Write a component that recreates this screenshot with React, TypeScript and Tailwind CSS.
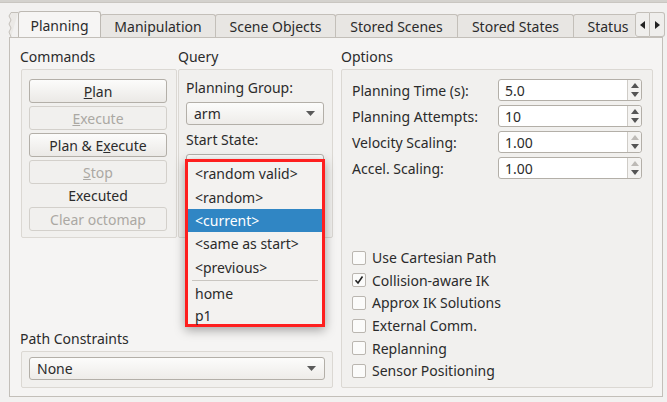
import React from 'react'

const font = "font-['Noto_Sans','DejaVu_Sans',sans-serif]"

function Btn({ children, disabled }: { children: React.ReactNode; disabled?: boolean }) {
  return (
    <div
      className={`h-[24px] flex items-center justify-center rounded-[3px] border text-[14px] ${
        disabled
          ? 'border-[#d3d0cb] text-[#aba8a3] bg-[#f1f0ee]'
          : 'border-[#b3afa8] text-[#2b2b2b] bg-linear-to-b from-[#fcfcfb] to-[#ebe9e6]'
      }`}
    >
      {children}
    </div>
  )
}

function Caret() {
  return (
    <svg width="9" height="5" viewBox="0 0 9 5" className="shrink-0">
      <path d="M0 0h9L4.5 5z" fill="#5a5a5a" />
    </svg>
  )
}

function Combo({ value, className = '' }: { value: string; className?: string }) {
  return (
    <div
      className={`h-[23px] flex items-center justify-between pl-[7px] pr-[8px] rounded-[3px] border border-[#b3afa8] bg-linear-to-b from-[#fcfcfb] to-[#eeece9] text-[14px] text-[#2b2b2b] ${className}`}
    >
      <span>{value}</span>
      <Caret />
    </div>
  )
}

function Spin({ value, upDisabled }: { value: string; upDisabled?: boolean }) {
  return (
    <div className="w-[144px] h-[22px] flex rounded-[3px] border border-[#b3afa8] bg-white text-[14px] text-[#2b2b2b]">
      <div className="flex-1 flex items-center pl-[6px]">{value}</div>
      <div className="w-[14px] flex flex-col items-center justify-center gap-[4px] border-l border-[#cfccc7] bg-[#f4f3f1] rounded-r-[3px]">
        <svg width="8" height="5" viewBox="0 0 8 5">
          <path d="M0 5h8L4 0z" fill={upDisabled ? '#bdbab6' : '#555'} />
        </svg>
        <svg width="8" height="5" viewBox="0 0 8 5">
          <path d="M0 0h8L4 5z" fill="#555" />
        </svg>
      </div>
    </div>
  )
}

function Check({ label, checked }: { label: string; checked?: boolean }) {
  return (
    <div className="h-[22.6px] flex items-center gap-[6px] text-[14px] text-[#2b2b2b]">
      <div className="w-[14px] h-[14px] rounded-[2px] border border-[#bab6b0] bg-[#fbfbfa] flex items-center justify-center">
        {checked && (
          <svg width="10" height="10" viewBox="0 0 10 10">
            <path d="M1.5 5.2 L4 8 L8.5 1.5" fill="none" stroke="#222" strokeWidth="1.6" />
          </svg>
        )}
      </div>
      <span>{label}</span>
    </div>
  )
}

function Tab({ label, w }: { label: string; w: string }) {
  return (
    <div
      className={`${w} shrink-0 h-[23px] flex items-center justify-center border border-b-0 border-[#c3bfb9] bg-[#e8e6e3] rounded-t-[3px] text-[14px] text-[#2b2b2b] -ml-[1px]`}
    >
      {label}
    </div>
  )
}

export default function App() {
  const items = ['<random valid>', '<random>', '<current>', '<same as start>', '<previous>']
  return (
    <div className={`${font} relative w-[667px] h-[402px] bg-[#f2f1f0] overflow-hidden flex flex-col`}>
      <div className="h-[3px] bg-[#d4d2ce] border-b border-[#c9c6c1]" />

      {/* tab bar */}
      <div className="h-[34px] flex items-end pl-[8px]">
        <svg width="10" height="25" viewBox="0 0 10 25" className="shrink-0">
          <path d="M10 0.5 H3 L1 4 L3 8 L1 12 L3 16 L1 20 L3 25" fill="#ebe9e6" stroke="#c3bfb9" />
        </svg>
        <div className="w-[617px] flex items-end overflow-hidden">
          <div className="w-[83px] shrink-0 h-[27px] flex items-center justify-center border border-b-0 border-[#bdb9b3] bg-[#f6f5f4] rounded-t-[3px] text-[14px] text-[#2b2b2b] relative z-10 -mb-[1px]">
            Planning
          </div>
          <Tab label="Manipulation" w="w-[116px]" />
          <Tab label="Scene Objects" w="w-[121px]" />
          <Tab label="Stored Scenes" w="w-[123px]" />
          <Tab label="Stored States" w="w-[117px]" />
          <Tab label="Status" w="w-[70px]" />
        </div>
        <div className="flex h-[25px]">
          <div className="w-[15px] flex items-center justify-center border border-[#c3bfb9] bg-[#efeeec] rounded-l-[3px]">
            <svg width="5" height="8" viewBox="0 0 5 8"><path d="M5 0v8L0 4z" fill="#222" /></svg>
          </div>
          <div className="w-[15px] flex items-center justify-center border border-l-0 border-[#c3bfb9] bg-[#efeeec] rounded-r-[3px]">
            <svg width="5" height="8" viewBox="0 0 5 8"><path d="M0 0v8L5 4z" fill="#222" /></svg>
          </div>
        </div>
      </div>

      {/* pane */}
      <div className="ml-[9px] w-[654px] h-[360px] border border-[#c3bfb9] bg-[#f5f4f3] flex gap-[8px] pl-[10px] pt-[9px] pb-[8px] text-[#2b2b2b]">
        {/* left column */}
        <div className="w-[313px] flex flex-col justify-between">
          <div className="flex gap-[1px]">
            <div className="w-[157px] flex flex-col">
              <div className="h-[22px] text-[14px] leading-[20px]">Commands</div>
              <div className="ml-[1px] w-[156px] h-[169px] border border-[#dbd8d3] rounded-[2px] bg-[#f1f0ee] pl-[7px] pt-[9px]">
                <div className="w-[138px] flex flex-col gap-[3px]">
                  <Btn><span><span className="underline">P</span>lan</span></Btn>
                  <Btn disabled><span><span className="underline">E</span>xecute</span></Btn>
                  <Btn><span>Plan &amp; E<span className="underline">x</span>ecute</span></Btn>
                  <Btn disabled><span><span className="underline">S</span>top</span></Btn>
                  <div className="h-[17px] flex items-center justify-center text-[14px]">Executed</div>
                  <Btn disabled>Clear octomap</Btn>
                </div>
              </div>
            </div>
            <div className="w-[155px] flex flex-col">
              <div className="h-[22px] text-[14px] leading-[20px]">Query</div>
              <div className="w-[155px] h-[169px] border border-[#dbd8d3] rounded-[2px] bg-[#f1f0ee] pl-[7px] pt-[8px]">
                <div className="w-[138px] flex flex-col">
                  <div className="h-[20px] text-[14px] leading-[20px]">Planning Group:</div>
                  <Combo value="arm" className="mt-[4px]" />
                  <div className="h-[20px] mt-[5px] text-[14px] leading-[20px]">Start State:</div>
                  {/* combo behind the open popup */}
                  <Combo value="" className="mt-[4px]" />
                </div>
              </div>
            </div>
          </div>

          <div className="flex flex-col">
            <div className="h-[22px] text-[14px] leading-[20px]">Path Constraints</div>
            <div className="ml-[1px] w-[312px] h-[37px] border border-[#dbd8d3] rounded-[2px] bg-[#f1f0ee] pl-[7px] pt-[5px]">
              <Combo value="None" className="w-[296px]" />
            </div>
          </div>
        </div>

        {/* right column */}
        <div className="w-[313px] flex flex-col">
          <div className="h-[22px] text-[14px] leading-[20px]">Options</div>
          <div className="w-[312px] h-[319px] border border-[#dbd8d3] rounded-[2px] bg-[#f1f0ee] pl-[10px] pt-[9px] pb-[5px] flex flex-col">
            <div className="flex flex-col gap-[4px]">
              {[
                ['Planning Time (s):', '5.0', false],
                ['Planning Attempts:', '10', false],
                ['Velocity Scaling:', '1.00', true],
                ['Accel. Scaling:', '1.00', true],
              ].map(([l, v, d]) => (
                <div key={l as string} className="flex items-center">
                  <div className="w-[146px] text-[14px]">{l as string}</div>
                  <Spin value={v as string} upDisabled={d as boolean} />
                </div>
              ))}
            </div>
            <div className="mt-auto flex flex-col">
              <Check label="Use Cartesian Path" />
              <Check label="Collision-aware IK" checked />
              <Check label="Approx IK Solutions" />
              <Check label="External Comm." />
              <Check label="Replanning" />
              <Check label="Sensor Positioning" />
            </div>
          </div>
        </div>
      </div>

      {/* start state popup */}
      <div className="absolute left-[185px] top-[159px] w-[140px] h-[168px] border-[3px] border-[#fe1f1f] bg-[#f3f2f0] shadow-[0_3px_10px_rgba(0,0,0,0.35)] text-[14px] text-[#2b2b2b] flex flex-col">
        {items.map((it) => (
          <div
            key={it}
            className={`h-[23.4px] shrink-0 flex items-center pl-[7px] ${
              it === '<current>' ? 'bg-[#3086c4] text-white' : ''
            }`}
          >
            {it}
          </div>
        ))}
        <div className="h-[4px] shrink-0 flex items-center px-[4px]">
          <div className="h-px w-full bg-[#c9c6c1]" />
        </div>
        <div className="h-[22px] shrink-0 flex items-center pl-[7px]">home</div>
        <div className="flex-1 flex items-center pl-[7px]">p1</div>
      </div>
    </div>
  )
}
